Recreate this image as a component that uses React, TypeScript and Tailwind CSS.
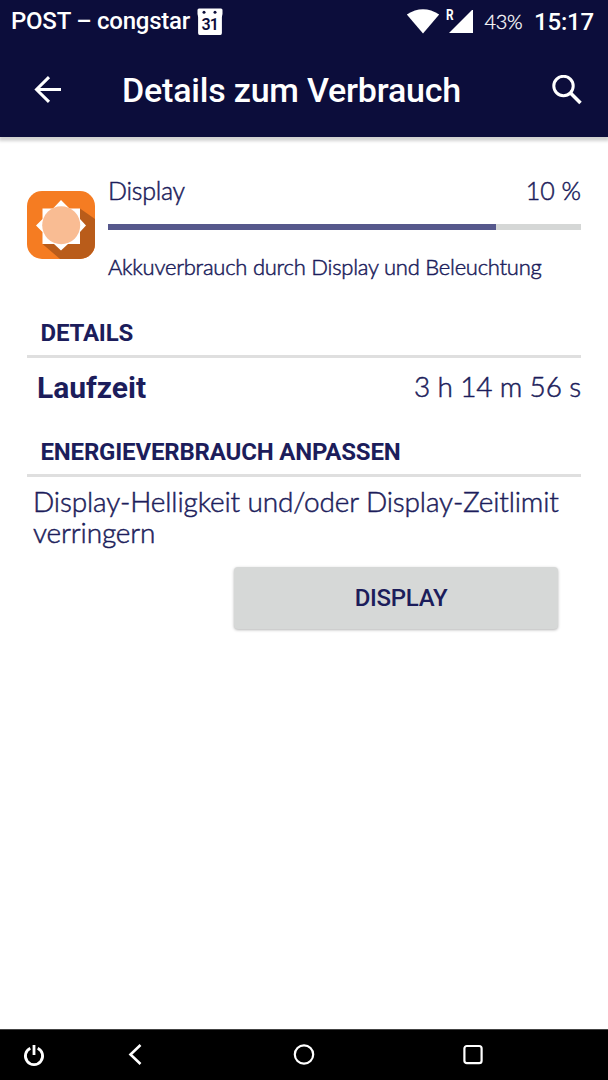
import React from "react";

const light = "font-['Lato',sans-serif] font-light whitespace-nowrap [-webkit-text-stroke:0.5px_#1c1d5b]";

function StatusBar() {
  return (
    <div className="flex h-[43px] items-center pl-[11px] pr-[14px] text-white">
      <span className="w-[180px] text-[24px] leading-[43px] font-medium tracking-[-0.25px] whitespace-nowrap">POST – congstar</span>
      <svg className="ml-[5px] h-[28px] w-[28px] shrink-0" viewBox="0 0 28 28">
        <path fill="#fff" d="M3 .500h22q1.500 0 1.500 1.500v4q-.600 2-.600 3.500v15.500q0 2-1.500 2h-20.800q-1.500 0-1.500-2v-15.500q0-1.500-.600-3.500v-4q0-1.500 1.500-1.500z" />
        <circle cx="8" cy="4.300" r="1.500" fill="#0c0d3b" />
        <circle cx="19" cy="4.300" r="1.500" fill="#0c0d3b" />
        <text x="13.700" y="21.500" textAnchor="middle" fontFamily="Roboto" fontSize="16" fontWeight="600" letterSpacing="-1" fill="#0c0d3b">31</text>
      </svg>
      <svg className="ml-auto h-[26px] w-[34px] shrink-0" viewBox="0 0 34 26">
        <path fill="#fff" d="M.800 5.500Q17-5 33.200 5.500L17 24.500z" />
      </svg>
      <span className="ml-[6px] -mt-[14px] w-[8px] origin-left scale-x-[0.85] text-[14px] leading-none font-bold">R</span>
      <svg className="-ml-[5px] h-[24px] w-[24px] shrink-0" viewBox="0 0 24 24">
        <path fill="#fff" d="M0 23L24 -1V23z" />
      </svg>
      <span className="ml-[12px] font-['Lato',sans-serif] text-[20px] leading-[43px] font-light tracking-[-0.4px] [-webkit-text-stroke:0.3px_#fff]">43%</span>
      <span className="ml-[12px] pt-[2px] text-[24px] leading-[43px] font-medium tracking-[-0.2px]">15:17</span>
    </div>
  );
}

function AppBar() {
  return (
    <div className="flex h-[94px] items-center pl-[34px] pr-[26px] text-white">
      <svg className="h-[28px] w-[28px]" viewBox="0 0 28 28" fill="none" stroke="#fff" strokeWidth="3">
        <path d="M27 13.500H2.500M15 1.100L2.500 13.500 15 25.900" />
      </svg>
      <h1 className="ml-[60px] text-[34px] leading-[94px] font-medium tracking-[-0.2px] whitespace-nowrap">Details zum Verbrauch</h1>
      <svg className="ml-auto h-[30px] w-[30px]" viewBox="0 0 30 30" fill="none" stroke="#fff">
        <circle cx="11.500" cy="11" r="9.700" strokeWidth="3" />
        <path d="M18.500 18L28.500 28" strokeWidth="3.600" />
      </svg>
    </div>
  );
}

function BrightnessIcon() {
  return (
    <svg className="h-[68px] w-[68px] shrink-0" viewBox="0 0 68 68">
      <defs>
        <clipPath id="tile">
          <rect width="68" height="68" rx="15" />
        </clipPath>
      </defs>
      <g clipPath="url(#tile)">
        <rect width="68" height="68" fill="#f57c22" />
        <path d="M53 17.500L68 28V68H33L15.500 53z" fill="#b95c1a" />
      </g>
      <path fill="#fff" d="M34 9l8.500 8.500H53v10.500L59 34.500 53 41v12H41L34 59.500 27 53H15.500V41L9 34.500l6.500-6.500V17.500H26z" />
      <circle cx="34.200" cy="34.300" r="19" fill="#f9bc93" />
    </svg>
  );
}

function SectionTitle({ children }: { children: React.ReactNode }) {
  return (
    <h2 className="h-[37px] border-b-[3px] border-[#dfdfdf] pl-[13.500px] text-[24px] leading-[24px] font-bold tracking-[-0.18px] whitespace-nowrap">
      {children}
    </h2>
  );
}

function NavBar() {
  return (
    <nav className="flex h-[51px] items-center border-t border-[#444] bg-black">
      <svg className="ml-[23px] h-[22px] w-[22px]" viewBox="0 0 22 22" fill="none" stroke="#fff" strokeWidth="2.800">
        <path d="M7.300 4.200A8.600 8.600 0 1 0 14.700 4.200M11 1V11" />
      </svg>
      <svg className="ml-[83px] h-[22px] w-[14px]" viewBox="0 0 14 22" fill="none" stroke="#fff" strokeWidth="2.600">
        <path d="M12.500 1L2.500 10.500l10 9.500" />
      </svg>
      <svg className="ml-[151px] h-[22px] w-[22px]" viewBox="0 0 22 22" fill="none" stroke="#fff" strokeWidth="2.200">
        <circle cx="11" cy="10.500" r="9.200" />
      </svg>
      <svg className="ml-[147px] h-[22px] w-[22px]" viewBox="0 0 22 22" fill="none" stroke="#fff" strokeWidth="2.200">
        <rect x="2.400" y="2" width="17.200" height="17.200" rx="2.500" />
      </svg>
    </nav>
  );
}

export default function App() {
  return (
    <div className="flex h-[1080px] w-[608px] flex-col overflow-hidden bg-white font-['Roboto',sans-serif] text-[#1c1d5b]">
      <header className="h-[137px] shrink-0 bg-[#0c0d3b] shadow-[0_3px_3px_1px_rgba(0,0,0,0.18)]">
        <StatusBar />
        <AppBar />
      </header>
      <main className="flex flex-1 flex-col px-[27px] pt-[37px]">
        <section className="flex h-[147px]">
          <div className="pt-[17px]">
            <BrightnessIcon />
          </div>
          <div className={`ml-[13px] flex-1 ${light}`}>
            <div className="flex h-[50px] justify-between text-[25px] leading-[33px]">
              <span className="tracking-[-0.25px]">Display</span>
              <span>10 %</span>
            </div>
            <div className="h-[6px] bg-[#d5d7d6]">
              <div className="h-full w-[388px] bg-[#56588c]" />
            </div>
            <p className="pt-[21px] text-[22px] leading-[32px] tracking-[-0.24px]">Akkuverbrauch durch Display und Beleuchtung</p>
          </div>
        </section>
        <section>
          <SectionTitle>DETAILS</SectionTitle>
          <div className="flex h-[82px] justify-between pl-[10px] leading-[59px]">
            <span className="text-[30px] font-bold">Laufzeit</span>
            <span className={`text-[28px] leading-[57px] tracking-[-0.15px] ${light}`}>3 h 14 m 56 s</span>
          </div>
        </section>
        <section>
          <SectionTitle>ENERGIEVERBRAUCH ANPASSEN</SectionTitle>
          <p className={`pt-[9px] pl-[6px] text-[28px] leading-[31px] tracking-[-0.14px] ${light}`}>
            Display-Helligkeit und/oder Display-Zeitlimit
            <br />
            verringern
          </p>
        </section>
        <button className="mt-[19px] mr-[23px] h-[62px] w-[324px] self-end rounded-[4px] bg-[#d6d8d7] pl-[10px] text-[24px] font-medium tracking-[-0.3px] shadow-[0_1px_3px_rgba(0,0,0,0.3)]">
          DISPLAY
        </button>
      </main>
      <NavBar />
    </div>
  );
}
